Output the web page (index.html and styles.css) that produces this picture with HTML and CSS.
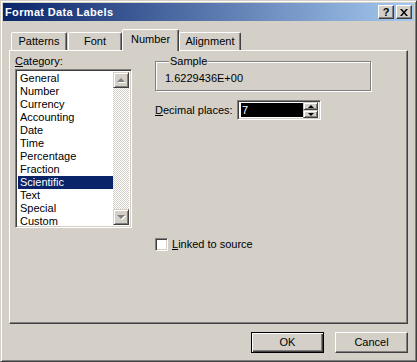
FILE: index.html
```html
<!DOCTYPE html>
<html>
<head>
<meta charset="utf-8">
<link rel="stylesheet" href="styles.css">
</head>
<body>
<div class="window">
  <div class="titlebar">
    <span class="title">Format Data Labels</span>
    <div class="caption-buttons">
      <div class="cap-btn help">?</div>
      <div class="cap-btn close">
        <svg width="8" height="7" viewBox="0 0 8 7"><path d="M0 0h2l2 2.5L6 0h2L5 3.5 8 7H6L4 4.5 2 7H0l3-3.5z" fill="#000"/></svg>
      </div>
    </div>
  </div>
  <div class="dialog">
    <div class="tabs">
      <div class="tab tab-patterns">Patterns</div>
      <div class="tab tab-font">Font</div>
      <div class="tab tab-number active">Number</div>
      <div class="tab tab-align">Alignment</div>
    </div>
    <div class="panel">
      <div class="col-left">
        <div class="label"><u>C</u>ategory:</div>
        <div class="listbox">
          <div class="items">
            <div class="item">General</div>
            <div class="item">Number</div>
            <div class="item">Currency</div>
            <div class="item">Accounting</div>
            <div class="item">Date</div>
            <div class="item">Time</div>
            <div class="item">Percentage</div>
            <div class="item">Fraction</div>
            <div class="item selected">Scientific</div>
            <div class="item">Text</div>
            <div class="item">Special</div>
            <div class="item">Custom</div>
          </div>
          <div class="scrollbar">
            <div class="sb-btn"><span class="arrow up"></span></div>
            <div class="sb-track"></div>
            <div class="sb-btn"><span class="arrow down"></span></div>
          </div>
        </div>
      </div>
      <div class="col-right">
        <fieldset class="group">
          <legend>Sample</legend>
          <div class="sample">1.6229436E+00</div>
        </fieldset>
        <div class="decimal-row">
          <span class="dlabel"><u>D</u>ecimal places:</span>
          <div class="spin">
            <div class="spin-edit"><span class="sel">7</span></div>
            <div class="spin-btns">
              <div class="spin-btn"><span class="sarrow up"></span></div>
              <div class="spin-btn"><span class="sarrow down"></span></div>
            </div>
          </div>
        </div>
        <div class="check-row">
          <span class="checkbox"></span>
          <span><u>L</u>inked to source</span>
        </div>
      </div>
    </div>
    <div class="buttons">
      <div class="btn default"><span>OK</span></div>
      <div class="btn"><span>Cancel</span></div>
    </div>
  </div>
</div>
</body>
</html>
```

FILE: styles.css
```css
* { box-sizing: border-box; }
html, body { margin: 0; padding: 0; }
body {
  font-family: "Liberation Sans", Arial, sans-serif;
  font-size: 11px;
  line-height: 13px;
  color: #000;
  background: #d4d0c8;
}
u { text-decoration: underline; text-underline-offset: 1px; }

.window {
  width: 417px;
  height: 362px;
  background: #d4d0c8;
  border: 1px solid;
  border-color: #d4d0c8 #404040 #404040 #d4d0c8;
  box-shadow: inset 1px 1px 0 #fff, inset -1px -1px 0 #808080;
  padding: 2px;
  display: flex;
  flex-direction: column;
}

.titlebar {
  height: 18px;
  background: linear-gradient(to right, #0a246a, #a6caf0);
  display: flex;
  align-items: center;
  justify-content: space-between;
  padding: 0 2px 0 2px;
}
.title {
  color: #fff;
  font-weight: bold;
  font-size: 11px;
  letter-spacing: 0.35px;
}
.caption-buttons { display: flex; gap: 2px; }
.cap-btn {
  width: 16px;
  height: 14px;
  background: #d4d0c8;
  border: 1px solid;
  border-color: #fff #404040 #404040 #fff;
  box-shadow: inset -1px -1px 0 #808080;
  display: flex;
  align-items: center;
  justify-content: center;
  font-weight: bold;
  font-size: 11px;
  line-height: 12px;
}

.dialog {
  flex: 1;
  display: flex;
  flex-direction: column;
  padding: 8px 6px 6px 6px;
}

.tabs {
  display: flex;
  align-items: flex-end;
  height: 22px;
  padding-left: 2px;
  position: relative;
  z-index: 1;
  margin-bottom: -1px;
}
.tab {
  height: 18px;
  margin-bottom: 1px;
  border: 1px solid;
  border-bottom: none;
  border-color: #fff #404040 transparent #fff;
  box-shadow: inset -1px 0 0 #808080;
  border-radius: 2px 2px 0 0;
  text-align: center;
  padding-top: 2px;
  background: #d4d0c8;
}
.tab-patterns { width: 56px; }
.tab-font { width: 54px; margin-left: 1px; }
.tab-number { width: 57px; }
.tab-align { width: 62px; }
.tab.active {
  height: 22px;
  margin-bottom: 0;
  padding-top: 3px;
}

.panel {
  height: 274px;
  border: 1px solid;
  border-color: #fff #404040 #404040 #fff;
  box-shadow: inset -1px -1px 0 #808080;
  display: flex;
  padding: 4px 0 0 5px;
  gap: 23px;
}

.col-left { width: 117px; display: flex; flex-direction: column; }
.label { margin-bottom: 1px; }
.listbox {
  height: 159px;
  border: 1px solid;
  border-color: #808080 #fff #fff #808080;
  box-shadow: inset 1px 1px 0 #404040, inset -1px -1px 0 #d4d0c8;
  background: #fff;
  padding: 2px;
  display: flex;
}
.items { flex: 1; }
.item { height: 13px; padding-left: 2px; white-space: nowrap; }
.item.selected { background: #0a246a; color: #fff; }

.scrollbar {
  width: 16px;
  display: flex;
  flex-direction: column;
}
.sb-btn {
  height: 16px;
  background: #d4d0c8;
  border: 1px solid;
  border-color: #d4d0c8 #404040 #404040 #d4d0c8;
  box-shadow: inset 1px 1px 0 #fff, inset -1px -1px 0 #808080;
  display: flex;
  align-items: center;
  justify-content: center;
}
.sb-track {
  flex: 1;
  background-color: #fff;
  background-image: conic-gradient(#d4d0c8 25%, #fff 0 50%, #d4d0c8 0 75%, #fff 0);
  background-size: 2px 2px;
}
.arrow {
  width: 0; height: 0;
  border-left: 4px solid transparent;
  border-right: 4px solid transparent;
}
.arrow.up { border-bottom: 4px solid #808080; filter: drop-shadow(1px 1px 0 #fff); }
.arrow.down { border-top: 4px solid #808080; filter: drop-shadow(1px 1px 0 #fff); }

.col-right { display: flex; flex-direction: column; width: 216px; }
.group {
  margin: 0;
  padding: 2px 0 5px 9px;
  border: 1px solid #808080;
  box-shadow: 1px 1px 0 #fff, inset 1px 1px 0 #fff;
  height: 36px;
  min-width: 0;
}
.group legend {
  padding: 0 1px;
  margin-left: 4px;
  background: #d4d0c8;
}
.sample { padding-top: 2px; }

.decimal-row {
  display: flex;
  align-items: center;
  margin-top: 9px;
}
.dlabel { width: 82px; }
.spin {
  width: 84px;
  height: 20px;
  border: 1px solid;
  border-color: #808080 #fff #fff #808080;
  box-shadow: inset 1px 1px 0 #404040, inset -1px -1px 0 #d4d0c8;
  background: #fff;
  padding: 2px;
  display: flex;
}
.spin-edit {
  flex: 1;
  background: #000;
  color: #fff;
  padding-left: 1px;
  border-left: 1px solid #fff;
  line-height: 14px;
}
.spin-btns { width: 15px; display: flex; flex-direction: column; margin: -1px 0; }
.spin-btn {
  flex: 1;
  background: #d4d0c8;
  border: 1px solid;
  border-color: #d4d0c8 #404040 #404040 #d4d0c8;
  box-shadow: inset 1px 1px 0 #fff, inset -1px -1px 0 #808080;
  display: flex;
  align-items: center;
  justify-content: center;
}
.sarrow { width: 0; height: 0; border-left: 3px solid transparent; border-right: 3px solid transparent; }
.sarrow.up { border-bottom: 3px solid #000; }
.sarrow.down { border-top: 3px solid #000; }

.check-row {
  display: flex;
  align-items: center;
  gap: 4px;
  margin-top: 118px;
}
.checkbox {
  width: 13px;
  height: 13px;
  border: 1px solid;
  border-color: #808080 #fff #fff #808080;
  box-shadow: inset 1px 1px 0 #404040, inset -1px -1px 0 #d4d0c8;
  background: #fff;
}

.buttons {
  display: flex;
  justify-content: flex-end;
  gap: 11px;
  margin-top: 8px;
}
.btn {
  width: 73px;
  height: 21px;
  background: #d4d0c8;
  border: 1px solid;
  border-color: #fff #404040 #404040 #fff;
  box-shadow: inset -1px -1px 0 #808080;
  display: flex;
  align-items: center;
  justify-content: center;
}
.btn.default {
  border: 1px solid #000;
  box-shadow: inset 1px 1px 0 #fff, inset -1px -1px 0 #404040, inset -2px -2px 0 #808080;
}
```
